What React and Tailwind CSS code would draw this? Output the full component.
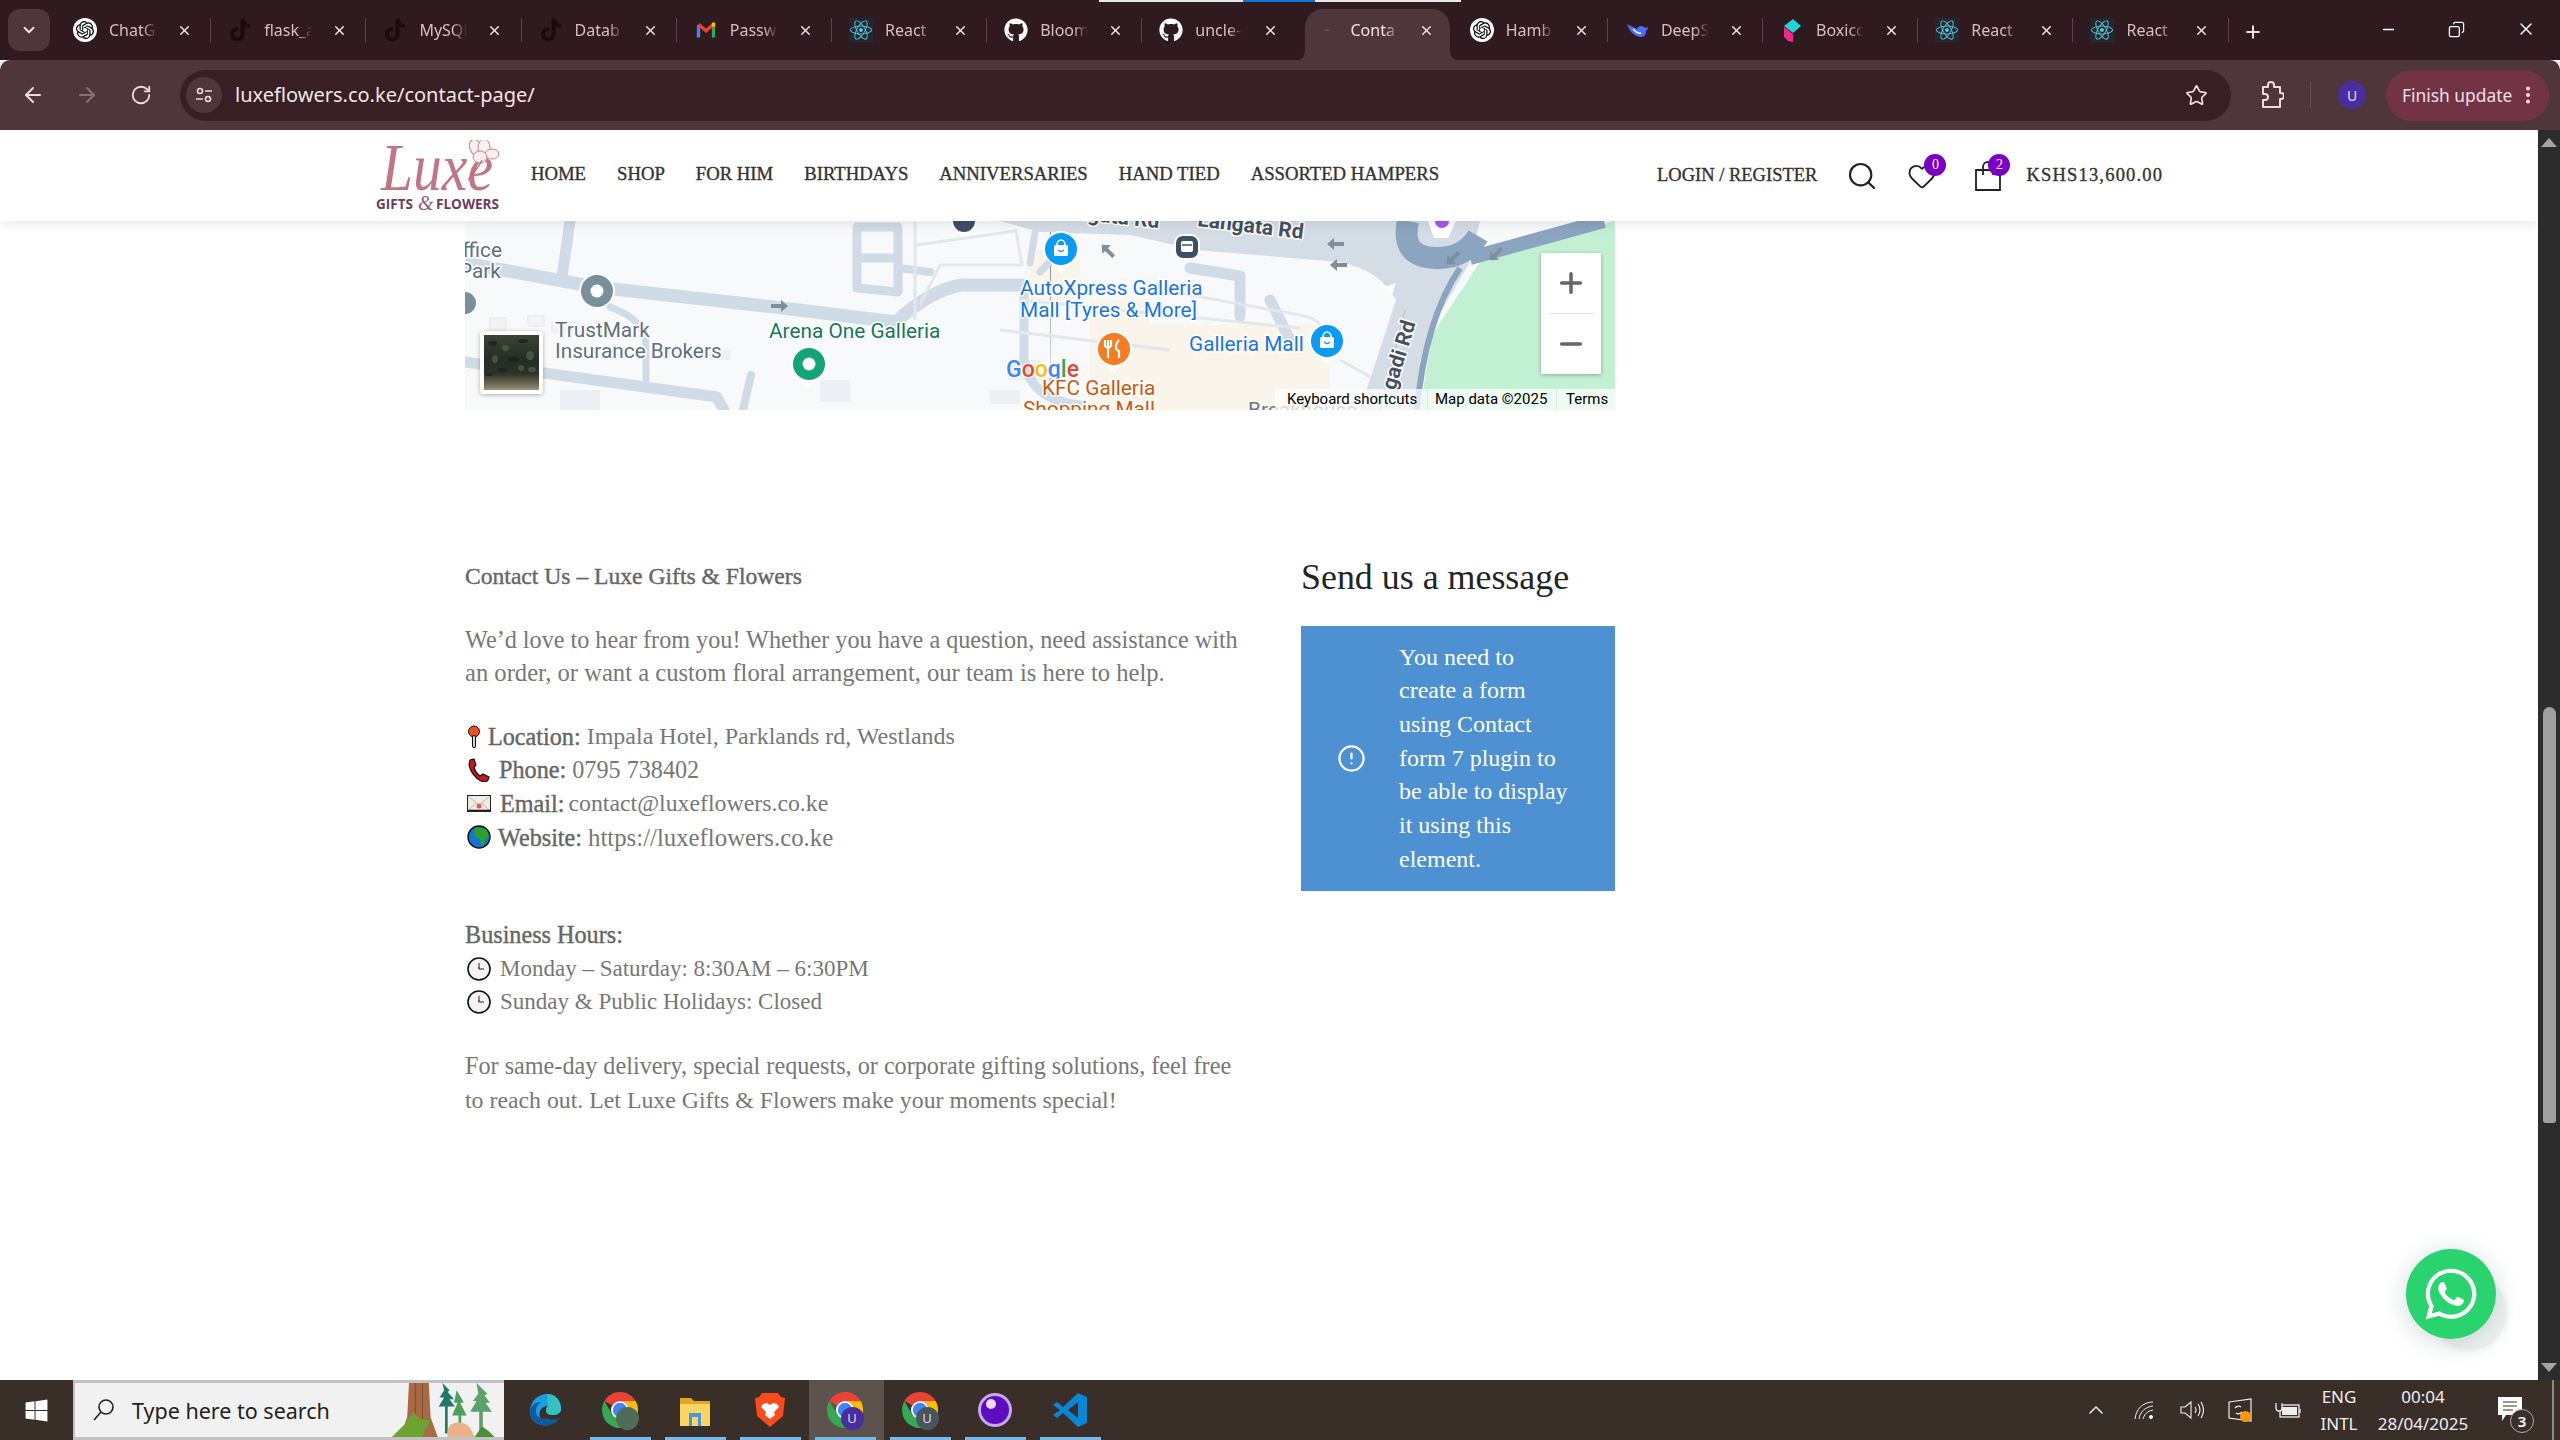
import React from "react";
import { ArrowLeft, ArrowRight, RotateCw, Star, EllipsisVertical, Plus, X, Minus, ChevronDown, ChevronUp, Copy, Search, Heart, AlertCircle } from "lucide-react";
import { FaGithub, FaTiktok, FaReact, FaWindows, FaWhatsapp } from "react-icons/fa";
import { SiOpenai } from "react-icons/si";

const serif = "font-['Liberation_Serif',serif]";
const semi = "[-webkit-text-stroke:0.4px_#666] text-[#666]";
const navSemi = "[-webkit-text-stroke:0.35px_#333] text-[#333]";

function Gmail() {
  return (
    <svg viewBox="0 0 24 24" className="w-[22px] h-[20px]" fill="none">
      <path d="M3 21V6" stroke="#4285f4" strokeWidth="4" />
      <path d="M21 21V6" stroke="#34a853" strokeWidth="4" />
      <path d="M3 5l9 8 9-8" stroke="#ea4335" strokeWidth="4" />
      <path d="M21 3v5" stroke="#fbbc04" strokeWidth="4" />
    </svg>
  );
}
function Openai() {
  return (
    <div className="w-[24px] h-[24px] rounded-full bg-white flex items-center justify-center">
      <SiOpenai className="w-[18px] h-[18px] text-black" />
    </div>
  );
}
function ReactIco() {
  return (
    <div className="w-[24px] h-[24px] bg-[#23272f] flex items-center justify-center">
      <FaReact className="w-[22px] h-[22px] text-[#58c4dc]" />
    </div>
  );
}
function Deep() {
  return (
    <svg viewBox="0 0 24 24" className="w-[24px] h-[24px]">
      <path d="M2 6c3 8 8 13 14 13 3 0 5-2 5-6 1-1 2-2 2-4-2 1-3 1-4 0-3-2-6-1-7 2-2-1-6-3-10-5z" fill="#4d6bfe" />
      <path d="M8 11c3 3 5 5 8 4" stroke="#fff" strokeWidth="1.4" fill="none" />
    </svg>
  );
}
function Boxi() {
  return (
    <svg viewBox="0 0 24 24" className="w-[24px] h-[28px]">
      <path d="M4 8l9-7 8 7-8 7z" fill="#22d3d6" />
      <path d="M4 9l9 7v8l-5-1-4-4z" fill="#f0288a" />
    </svg>
  );
}
const gh = <FaGithub className="w-[24px] h-[24px] text-white" />;
const tt = <FaTiktok className="w-[20px] h-[24px] text-[#1a0b0f]" />;

const tabs = [
  ["ChatG", <Openai />],
  ["flask_a", tt],
  ["MySQL", tt],
  ["Datab", tt],
  ["Passw", <Gmail />],
  ["React", <ReactIco />],
  ["Bloom", gh],
  ["uncle-", gh],
  ["Conta", <span className="text-[10px] text-[#7d5c63]">~</span>, true],
  ["Hamb", <Openai />],
  ["DeepS", <Deep />],
  ["Boxicc", <Boxi />],
  ["React", <ReactIco />],
  ["React", <ReactIco />],
];

function TabStrip() {
  return (
    <div className="h-[60px] shrink-0 bg-[#2f1a20] flex pt-[9px] relative font-['Noto_Sans',sans-serif]">
      <div className="absolute top-0 left-[1099px] w-[362px] h-[2px] bg-[#e8e8e8]">
        <div className="ml-[144px] w-[72px] h-[2px] bg-[#0a74d8]" />
      </div>
      <div className="w-[42px] h-[42px] ml-[8px] mr-[6px] rounded-xl bg-[#4f363b] flex items-center justify-center text-[#f3dfe3]">
        <ChevronDown size={18} strokeWidth={2.5} />
      </div>
      {tabs.map(([t, ico, active], i) => (
        <div key={i} className="w-[155.2px] h-[51px] relative">
          {active && (
            <div className="absolute left-[7px] right-[3px] top-0 bottom-0 bg-[#4f363b] rounded-t-[18px]">
              <svg className="absolute -left-[8px] bottom-0 w-[8px] h-[10px]" viewBox="0 0 8 10"><path d="M8 0v10H0c5 0 8-4 8-10z" fill="#4f363b" /></svg>
              <svg className="absolute -right-[8px] bottom-0 w-[8px] h-[10px]" viewBox="0 0 8 10"><path d="M0 0v10h8C3 10 0 6 0 0z" fill="#4f363b" /></svg>
            </div>
          )}
          <div className={`relative mt-[9px] h-[24px] flex items-center pl-[17px] ${active || i === 7 ? "" : "border-r border-[#5f454a]"}`}>
            <div className="w-[24px] h-[24px] flex items-center justify-center shrink-0">{ico}</div>
            <div className={`ml-[12px] w-[48px] overflow-hidden whitespace-nowrap text-[16px] [mask-image:linear-gradient(90deg,#000_70%,transparent)] ${active ? "text-[#f3dfe3]" : "text-[#d9bcc2]"}`}>{t}</div>
            <X size={15} strokeWidth={2.4} className="ml-[20px] text-[#f3dfe3] shrink-0" />
          </div>
        </div>
      ))}
      <Plus size={20} strokeWidth={2.4} className="ml-[14px] mt-[13px] text-[#f3dfe3]" />
      <div className="ml-auto flex text-white h-[40px] items-center">
        <Minus size={17} strokeWidth={2} className="mr-[51px]" />
        <Copy size={17} strokeWidth={1.8} className="mr-[51px] -scale-x-100" />
        <X size={20} strokeWidth={1.7} className="mr-[24px]" />
      </div>
    </div>
  );
}

function Toolbar() {
  return (
    <div className="h-[70px] shrink-0 bg-[#4f363b] rounded-t-[10px] flex items-center text-[#f0d8dd] font-['Noto_Sans',sans-serif]">
      <ArrowLeft size={24} strokeWidth={2} className="ml-[21px]" />
      <ArrowRight size={24} strokeWidth={2} className="ml-[30px] text-[#8a6f75]" />
      <RotateCw size={22} strokeWidth={2} className="ml-[31px]" />
      <div className="ml-[28px] w-[2051px] h-[51px] rounded-full bg-[#371f24] flex items-center">
        <div className="ml-[6px] w-[36px] h-[36px] rounded-full bg-[#4f363b] flex items-center justify-center">
          <svg viewBox="0 0 20 20" className="w-[20px] h-[20px]" fill="none" stroke="#f0d8dd" strokeWidth="1.6">
            <circle cx="6" cy="6" r="2.5" /><path d="M11 6h7M2 14h7" /><circle cx="14" cy="14" r="2.5" />
          </svg>
        </div>
        <div className="ml-[13px] text-[20px] leading-none text-[#f3e4e7]">luxeflowers.co.ke/contact-page/</div>
        <Star size={23} strokeWidth={1.8} className="ml-auto mr-[23px]" />
      </div>
      <svg viewBox="0 0 24 30" className="ml-[29px] w-[24px] h-[30px]" fill="none" stroke="#f0d8dd" strokeWidth="2" strokeLinejoin="round">
        <path d="M3 7h5V5a3 3 0 0 1 6 0v2h6v6h1a3 3 0 0 1 0 6h-1v8H3v-7h2a3 3 0 0 0 0-6H3z" />
      </svg>
      <div className="ml-[26px] w-[1px] h-[26px] bg-[#6b5056]" />
      <div className="ml-[27px] w-[28px] h-[28px] rounded-full bg-[#4a2d9e] flex items-center justify-center text-[14px] text-[#e6dcff]">U</div>
      <div className="ml-[20px] w-[163px] h-[51px] rounded-full bg-[#723445] flex items-center pl-[16px] text-[17.4px] text-[#f3dfe3] whitespace-nowrap">
        Finish update
        <EllipsisVertical size={22} strokeWidth={2.4} className="ml-[5px]" />
      </div>
    </div>
  );
}

function Logo() {
  return (
    <svg viewBox="376 142 124 72" className="w-[124px] h-[72px] shrink-0">
      <text x="381" y="192" fontFamily="'Liberation Serif',serif" fontStyle="italic" fontSize="68" fill="#c27582" textLength="112" lengthAdjust="spacingAndGlyphs">Luxe</text>
      <g fill="#fbeff1" stroke="#c9808c" strokeWidth="1">
        <ellipse cx="476" cy="150" rx="6" ry="9" transform="rotate(-25 476 150)" />
        <ellipse cx="484" cy="150" rx="6" ry="9" />
        <ellipse cx="492" cy="156" rx="7" ry="5" />
        <ellipse cx="480" cy="159" rx="7" ry="6" />
      </g>
      <path d="M482 162c-2 6-8 12-14 20" stroke="#bd6874" strokeWidth="1.2" fill="none" />
      <text x="376" y="211" fontFamily="'Open Sans',sans-serif" fontWeight="700" fontSize="13.5" fill="#6e3a5f">GIFTS</text>
      <text x="418" y="212" fontFamily="'Liberation Serif',serif" fontStyle="italic" fontSize="20" fill="#8a5a78">&amp;</text>
      <text x="436" y="211" fontFamily="'Open Sans',sans-serif" fontWeight="700" fontSize="13.5" fill="#6e3a5f" textLength="63" lengthAdjust="spacingAndGlyphs">FLOWERS</text>
    </svg>
  );
}

function Badge({ n }) {
  return (
    <span className="absolute -top-[7px] -right-[9px] w-[22px] h-[22px] rounded-full bg-[#7a00c4] text-white text-[14px] flex items-center justify-center">{n}</span>
  );
}

function Header() {
  return (
    <header className={`relative z-10 h-[91px] bg-white shadow-[0_2px_12px_rgba(0,0,0,0.10)] flex items-center pl-[376px] ${serif}`}>
      <Logo />
      <nav className={`ml-[31px] flex gap-[31px] text-[18.7px] whitespace-nowrap -mt-[3px] ${navSemi}`}>
        <span>HOME</span><span>SHOP</span><span>FOR HIM</span><span>BIRTHDAYS</span><span>ANNIVERSARIES</span><span>HAND TIED</span><span>ASSORTED HAMPERS</span>
      </nav>
      <span className={`ml-[218px] text-[18.5px] whitespace-nowrap ${navSemi}`}>LOGIN / REGISTER</span>
      <Search size={32} strokeWidth={1.6} className="ml-[29px] text-[#222]" />
      <div className="relative ml-[29px]"><Heart size={30} strokeWidth={1.5} className="text-[#222]" /><Badge n="0" /></div>
      <div className="relative ml-[38px]">
        <svg viewBox="0 0 26 30" className="w-[26px] h-[30px]" fill="none" stroke="#222" strokeWidth="1.8"><path d="M1 9h24v20H1z" /><path d="M8 14V6a5 5 0 0 1 10 0v8" /></svg>
        <Badge n="2" />
      </div>
      <span className={`ml-[25px] text-[18.5px] tracking-[1.2px] whitespace-nowrap ${navSemi}`}>KSHS13,600.00</span>
    </header>
  );
}

function Pin({ x, y, c, r = 16, icon }) {
  return (
    <g>
      <path d={`M${x - r - 2} ${y}a${r + 2} ${r + 2} 0 1 1 ${2 * r + 4} 0c0 10-10 14-${r + 2} 24c-${r - 8}-10-${r + 2}-14-${r + 2}-24z`} fill="#fff" />
      <circle cx={x} cy={y} r={r} fill={c} />
      {icon}
    </g>
  );
}
function Bag({ x, y }) {
  return (
    <g fill="#fff">
      <rect x={x - 7} y={y - 3} width="14" height="11" rx="1.5" />
      <path d={`M${x - 4} ${y - 3}a4 5 0 0 1 8 0`} stroke="#fff" strokeWidth="1.6" fill="none" />
      <path d={`M${x - 3} ${y + 2}q3 3 6 0`} stroke="#0a9bf5" strokeWidth="1.2" fill="none" />
    </g>
  );
}
const Arrow = ({ x, y, rot }) => (
  <path d="M-9 0l7-6v4h10v4H-2v4z" fill="#7e8e9c" transform={`translate(${x} ${y}) rotate(${rot})`} />
);

const spots = [[4,6,9,5],[18,10,7,6],[34,4,10,4],[8,20,6,8],[24,22,12,5],[42,16,8,9],[14,33,9,4],[34,30,6,6],[2,38,7,3],[44,32,8,5]];

function MapView() {
  const halo = { paintOrder: "stroke", stroke: "#fff", strokeWidth: 3, strokeLinejoin: "round" };
  const road = { fill: "none", stroke: "#cfdbe6", strokeLinecap: "round", strokeLinejoin: "round" };
  const thin = { fill: "none", stroke: "#e3e7ec", strokeWidth: 3 };
  return (
    <div className="relative h-[189px] w-[1150px] overflow-hidden bg-[#f8f9fa] font-['Roboto',sans-serif]">
      <svg viewBox="465 221 1150 189" className="w-[1150px] h-[189px] block">
        <rect x="465" y="221" width="1150" height="189" fill="#f8f9fa" />
        <path d="M1030 250h50v50h-50zM1090 300h60v110h-60zM1150 325h180v85h-180z" fill="#faf5ea" />
        <path d="M820 380h30v22h-30zM1010 360h30v20h-30zM990 390h30v14h-30zM700 350h30v10h-30zM560 390h40v20h-40z" fill="#eceff3" />
        <path d="M490 318h16v12h-16zM528 316h16v10h-16zM552 322h20v10h-20zM575 325h14v10h-14z" fill="#f1f3f5" stroke="#e3e7ec" />
        <path d="M1050 221h1v189" stroke="#eef0f2" />
        <path d="M465 263L595 287L774 307L896 322Q930 290 962 285L1024 285" {...road} strokeWidth="13" />
        <path d="M570 221L562 277" {...road} strokeWidth="11" />
        <path d="M610 307Q646 320 646 345V380" {...road} strokeWidth="7" />
        <path d="M465 362L544 373L717 397L724 410" {...road} strokeWidth="11" />
        <path d="M751 375L743 410" {...road} strokeWidth="8" />
        <path d="M857 227h41v65l-41-4zM858 258h40" {...road} strokeWidth="9" />
        <path d="M898 268l32 4" {...road} strokeWidth="8" />
        <path d="M915 222V320" {...thin} /><path d="M916 245l100-14 6 34-82 0-20 40" {...thin} />
        <path d="M1024 285V360Q1030 400 1080 405" {...road} strokeWidth="9" />
        <path d="M1190 268l50 8v40M1270 300l20 40" {...road} strokeWidth="11" />
        <path d="M1020 300l280 28M1000 330l170 20M1175 292l130 24q20 4 22 30" {...thin} />
        <path d="M1340 360l40 22" {...thin} />
        <path d="M1000 221H1410L1480 221L1470 262L1430 330L1418 410H1360L1396 300Q1380 270 1340 262L1197 250L1130 235L1040 232z" fill="#d4dde6" />
        <path d="M1035 233l-5 30M1060 250q-8 10-20 22" {...road} strokeWidth="7" />
        <path d="M1613 221H1615V410H1420L1432 335L1480 262z" fill="#c1f0d3" />
        <path d="M1460 268Q1425 320 1417 410" fill="none" stroke="#8ba4c0" strokeWidth="6" />
        <path d="M1604 221L1470 258" fill="none" stroke="#8ba4c0" strokeWidth="14" />
        <path d="M1408 221Q1400 258 1437 258Q1465 258 1478 236" fill="none" stroke="#8ba4c0" strokeWidth="22" />
        <path d="M1428 221h28l-8 17h-14z" fill="#fff" />
        <circle cx="1442" cy="221" r="7" fill="#a855f7" />
        <path d="M1396 283l-4 12-8-8z" fill="#fff" />
        <path d="M1380 410l25-100" stroke="#b8c3cf" strokeWidth="1" />
        <Arrow x={1336} y={244} rot={0} />
        <Arrow x={1339} y={265} rot={0} />
        <Arrow x={1453} y={258} rot={-45} />
        <Arrow x={1496} y={254} rot={-45} />
        <Arrow x={779} y={306} rot={180} />
        <Arrow x={1108} y={251} rot={45} />
        <circle cx="964" cy="221" r="12" fill="#3d5069" stroke="#fff" strokeWidth="2" />
        <rect x="1175" y="235" width="24" height="24" rx="8" fill="#3d5069" stroke="#fff" strokeWidth="2" />
        <rect x="1181" y="241" width="12" height="11" rx="2" fill="#fff" />
        <path d="M1182 245h10" stroke="#3d5069" strokeWidth="1.5" />
        <text fontFamily="Roboto,sans-serif" fontWeight="700" fontSize="21" fill="#44525f" transform="translate(1197 226) rotate(7)" style={halo}>Langata Rd</text>
        <text fontFamily="Roboto,sans-serif" fontWeight="700" fontSize="21" fill="#44525f" transform="translate(1053 217) rotate(6)" style={halo}>Langata Rd</text>
        <text fontFamily="Roboto,sans-serif" fontWeight="700" fontSize="21" fill="#44525f" transform="translate(1395 391) rotate(-73)" style={halo}>gadi Rd</text>
        <g fontFamily="Roboto,sans-serif" fontSize="20.8">
          <text x="465" y="257" fill="#5c7080" style={halo} dx="-17">Office</text>
          <text x="465" y="278" fill="#5c7080" style={halo} dx="-6">Park</text>
          <text x="555" y="337" fill="#5c7080" style={halo}>TrustMark</text>
          <text x="555" y="358" fill="#5c7080" style={halo}>Insurance Brokers</text>
          <text x="769" y="338" fill="#137a57" style={halo}>Arena One Galleria</text>
          <text x="1020" y="295" fill="#1a73e8" style={halo}>AutoXpress Galleria</text>
          <text x="1020" y="317" fill="#1a73e8" style={halo}>Mall [Tyres &amp; More]</text>
          <text x="1189" y="351" fill="#1a73e8" style={halo}>Galleria Mall</text>
          <text x="1248" y="417" fill="#6b7c8c">Breakhouse</text>
        </g>
        <Pin x={1061} y={249} c="#0a9bf5" icon={<Bag x={1061} y={248} />} />
        <Pin x={1327} y={341} c="#0a9bf5" icon={<Bag x={1327} y={340} />} />
        <Pin x={1114} y={349} c="#f57c21" icon={<path d="M1108 340v18M1119 340c-4 4-4 10 0 11v7M1105 340v6q3 3 6 0v-6" stroke="#fff" strokeWidth="2.2" fill="none" />} />
        <Pin x={597} y={291} c="#78909c" icon={<circle cx="597" cy="291" r="6.5" fill="#fff" />} />
        <Pin x={809} y={364} c="#12a578" icon={<circle cx="809" cy="364" r="6.5" fill="#fff" />} />
        <circle cx="465" cy="303" r="12" fill="#78909c" stroke="#fff" strokeWidth="2" />
        <text x="1006" y="377" fontFamily="Roboto,sans-serif" fontWeight="500" fontSize="23" style={{ paintOrder: "stroke", stroke: "#fff", strokeWidth: 2 }}>
          <tspan fill="#4285f4">G</tspan><tspan fill="#ea4335">o</tspan><tspan fill="#fbbc04">o</tspan><tspan fill="#4285f4">g</tspan><tspan fill="#34a853">l</tspan><tspan fill="#ea4335">e</tspan>
        </text>
        <g fontFamily="Roboto,sans-serif" fontSize="20.8" fill="#c9590e">
          <text x="1042" y="395" style={halo}>KFC Galleria</text>
          <text x="1023" y="416" style={halo}>Shopping Mall</text>
        </g>
      </svg>
      <div className="absolute left-[15px] top-[110px] w-[63px] h-[63px] rounded-[4px] border-[4px] border-white shadow-[0_1px_4px_rgba(0,0,0,0.3)] overflow-hidden bg-[linear-gradient(180deg,#3a4434_0%,#222e26_45%,#2b3326_70%,#6a6650_88%,#9a927c_100%)]">
        <svg viewBox="0 0 55 55" className="w-full h-full block">
          {spots.map(([x, y, w, h], i) => (
            <ellipse key={i} cx={x + w / 2} cy={y + h / 2} rx={w / 2} ry={h / 2} fill={i % 2 ? "#5a5f48" : "#161f1a"} opacity="0.7" />
          ))}
        </svg>
      </div>
      <div className="absolute left-[1076px] top-[32px] w-[60px] h-[121px] bg-white shadow-[0_1px_4px_rgba(0,0,0,0.3)] flex flex-col items-center text-[#666]">
        <div className="h-[60px] flex items-center justify-center"><Plus size={32} strokeWidth={2.6} /></div>
        <div className="w-[45px] h-[1px] bg-[#e6e6e6]" />
        <div className="h-[60px] flex items-center justify-center"><Minus size={32} strokeWidth={2.6} /></div>
      </div>
      <div className="absolute right-0 bottom-0 h-[21px] w-[340px] bg-[rgba(255,255,255,0.72)] flex items-center text-[15px] text-black whitespace-nowrap">
        <span className="ml-[12px] w-[140px]">Keyboard shortcuts</span>
        <span className="w-[129px] pl-[7px] border-l border-[#dfe5e2]">Map data ©2025</span>
        <span className="pl-[9px] border-l border-[#dfe5e2]">Terms</span>
      </div>
    </div>
  );
}

const Pinny = () => (
  <svg viewBox="0 0 14 24" className="w-[14px] h-[24px] shrink-0 mr-[7px] ml-[2px]">
    <circle cx="7" cy="6.5" r="5.5" fill="#f04f1f" stroke="#111" strokeWidth="1" />
    <path d="M7 12v9" stroke="#111" strokeWidth="4" strokeLinecap="round" /><path d="M7 12v9" stroke="#eee" strokeWidth="1.8" strokeLinecap="round" />
  </svg>
);
const Phone = () => (
  <svg viewBox="0 0 24 24" className="w-[24px] h-[24px] shrink-0 mr-[8px] ml-[2px]">
    <path d="M3 2l4-1 2 6-2 2c1 4 3 7 6 9l3-2 6 3-1 3c-1 2-4 2-7 1C8 20 3 13 2 7z" fill="#c8161d" stroke="#111" strokeWidth="1.2" />
  </svg>
);
const Mail = () => (
  <svg viewBox="0 0 24 17" className="w-[24px] h-[17px] shrink-0 mr-[9px] ml-[2px]">
    <rect x="0.5" y="0.5" width="23" height="16" fill="#f2ebe4" stroke="#222" />
    <path d="M1 1l11 9 11-9M1 16l8-8M23 16l-8-8" stroke="#bbb" fill="none" />
    <circle cx="12" cy="11" r="2.5" fill="#e0604a" />
    <path d="M0 15.5h24" stroke="#222" strokeWidth="1.6" />
  </svg>
);
const Globe = () => (
  <svg viewBox="0 0 24 24" className="w-[24px] h-[24px] shrink-0 mr-[7px] ml-[2px]">
    <circle cx="12" cy="12" r="11" fill="#1274d4" stroke="#111" strokeWidth="1.4" />
    <path d="M9 2l10 2 3 6-4 5-1 6-3-1-1-6-5-2-1-5z" fill="#2ca02c" />
  </svg>
);
const Clock = () => (
  <svg viewBox="0 0 24 24" className="w-[24px] h-[24px] shrink-0 mr-[9px] ml-[2px]">
    <circle cx="12" cy="12" r="11" fill="#f4f4f4" stroke="#111" strokeWidth="1.6" />
    <path d="M12 6v6h5" stroke="#222" strokeWidth="1" fill="none" /><path d="M12 10v2" stroke="#d01c1c" strokeWidth="1.4" />
  </svg>
);

function Row({ icon, label, children, cls = "", gap = "mr-[6px]" }) {
  return (
    <div className={`flex items-center h-[33.6px] whitespace-nowrap ${cls}`}>
      {icon}
      {label && <b className={`font-normal text-[24.2px] ${gap} ${semi}`}>{label}</b>}
      {children}
    </div>
  );
}

function Content() {
  return (
    <div className={`ml-[465px] w-[1150px] pt-[150px] flex ${serif}`}>
      <div className="w-[790px] text-[24.2px] leading-[33.6px] text-[#777]">
        <p className={`mb-[29px] text-[23.6px] ${semi}`}>Contact Us – Luxe Gifts &amp; Flowers</p>
        <p className="mb-[30px]">We’d love to hear from you! Whether you have a question, need assistance with<br /><span className="text-[24.6px]">an order, or want a custom floral arrangement, our team is here to help.</span></p>
        <Row icon={<Pinny />} label="Location:" cls="text-[24px]">Impala Hotel, Parklands rd, Westlands</Row>
        <Row icon={<Phone />} label="Phone:">0795 738402</Row>
        <Row icon={<Mail />} label="Email:" cls="text-[23.8px]" gap="mr-[4px]">contact@luxeflowers.co.ke</Row>
        <Row icon={<Globe />} label="Website:" cls="text-[24.8px]">https://luxeflowers.co.ke</Row>
        <p className={`mt-[64px] ${semi}`}>Business Hours:</p>
        <Row icon={<Clock />} cls="text-[23px]">Monday – Saturday: 8:30AM – 6:30PM</Row>
        <Row icon={<Clock />} cls="text-[23px]">Sunday &amp; Public Holidays: Closed</Row>
        <p className="mt-[30px]">For same-day delivery, special requests, or corporate gifting solutions, feel free<br /><span className="text-[23.8px]">to reach out. Let Luxe Gifts &amp; Flowers make your moments special!</span></p>
      </div>
      <div className="ml-auto w-[314px]">
        <h2 className="text-[35.9px] leading-[34px] text-[#242424] font-normal">Send us a message</h2>
        <div className="mt-[32px] h-[265px] bg-[#4d91d3] flex items-center text-white text-[24px] leading-[33.7px]">
          <AlertCircle size={29} strokeWidth={1.8} className="ml-[36px] shrink-0" />
          <p className="ml-[33px] whitespace-nowrap">You need to<br />create a form<br />using Contact<br />form 7 plugin to<br />be able to display<br />it using this<br />element.</p>
        </div>
      </div>
    </div>
  );
}

function Chrome({ badge, bc = "#4a2d9e", t = "U" }) {
  return (
    <div className="relative w-[36px] h-[40px] flex items-center">
      <svg viewBox="4 4 40 40" className="w-[36px] h-[36px]">
        <path d="M6.68 14A20 20 0 0 1 41.32 14H24A10 10 0 0 0 15.34 19Z" fill="#ea4335" />
        <path d="M6.68 14A20 20 0 0 0 24 44L32.66 29A10 10 0 0 1 15.34 29Z" fill="#34a853" />
        <path d="M24 14H41.32A20 20 0 0 1 24 44L32.66 29A10 10 0 0 0 24 14Z" fill="#fbbc04" />
        <circle cx="24" cy="24" r="10" fill="#fff" /><circle cx="24" cy="24" r="8" fill="#4285f4" />
      </svg>
      {badge && <span className="absolute -right-[1px] bottom-0 w-[23px] h-[23px] rounded-full flex items-center justify-center text-[13px] text-[#ddd]" style={{ background: bc }}>{t}</span>}
    </div>
  );
}

const apps = [
  [<svg viewBox="0 0 36 36" className="w-[36px] h-[36px]"><path d="M3 20C3 8 12 2 20 2c9 0 14 7 14 15 0 4-4 6-8 6-5 0-7-2-7-5 0-2 1-3 2-4-6 0-10 5-8 11 1 4 5 8 10 8-10 2-20-3-20-13z" fill="#1b9de2" /><path d="M3 20c0 10 10 15 20 13 4-1 7-3 9-7-4 2-9 2-12 0-5 2-11-1-11-7 0-5 3-8 6-9C9 10 3 13 3 20z" fill="#0c59a4" /><path d="M20 2c9 0 14 7 14 15 0 4-4 6-8 6-5 0-7-2-7-5 0-2 1-3 2-4" fill="#35c1c1" /></svg>, false, false],
  [<Chrome badge bc="#4f6b5a" t="" />, true, false],
  [<svg viewBox="0 0 32 34" className="w-[32px] h-[34px]"><path d="M1 5h11l3 3h16v8H1z" fill="#e3a81e" /><path d="M1 11h30v22H1z" fill="#fcd462" /><path d="M10 20h12v13H10z" fill="#3f9ae0" /><path d="M13 24h6v9h-6z" fill="#fcd462" /></svg>, true, false],
  [<svg viewBox="0 0 30 36" className="w-[30px] h-[36px]"><path d="M7 1h16l3 4 4 1-2 18-13 11L2 24 0 6l4-1z" fill="#fb4a1c" /><path d="M8 12l4-1 3 2 3-2 4 1 2 3-5 5 1 3-5 4-5-4 1-3-5-5z" fill="#fff" /></svg>, true, false],
  [<Chrome badge />, true, true],
  [<Chrome badge bc="#46565f" />, true, false],
  [<svg viewBox="0 0 36 36" className="w-[36px] h-[36px]"><circle cx="18" cy="18" r="17" fill="#c9a8f0" /><circle cx="18" cy="18" r="14" fill="#5d0cc0" /><circle cx="14" cy="12" r="5" fill="#e9dbff" /></svg>, true, false],
  [<svg viewBox="0 0 36 36" className="w-[36px] h-[36px]"><path d="M26 1l9 4v26l-9 4L11 21l-6 5-4-3 7-5-7-5 4-3 6 5z" fill="#0a86d8" /><path d="M26 10v16l-10-8z" fill="#3a2e29" /></svg>, true, false],
];

function Taskbar() {
  return (
    <div className="h-[60px] shrink-0 bg-[#3a2e29] flex items-stretch text-white font-['Noto_Sans',sans-serif]">
      <div className="w-[73px] flex items-center justify-center"><FaWindows size={25} /></div>
      <div className="w-[431px] bg-[#f1f1f1] border-t-[3px] border-b-[3px] border-l-[2px] border-[#c2c2c2] flex items-center relative overflow-hidden">
        <svg viewBox="0 0 24 24" className="ml-[17px] w-[24px] h-[24px]" fill="none" stroke="#222" strokeWidth="1.6"><circle cx="14" cy="9" r="7" /><path d="M9 14l-7 8" /></svg>
        <span className="ml-[16px] mt-[2px] text-[21.5px] text-[#222] whitespace-nowrap">Type here to search</span>
        <svg viewBox="386 1380 118 60" className="absolute right-0 top-0 w-[118px] h-[54px]">
          <path d="M405 1380h22l2 38 8 22h-42l8-22z" fill="#a86a45" />
          <path d="M412 1380v40M420 1380v40" stroke="#7d4a2b" />
          <path d="M442 1380l8 8 -2 2 7 8h-5l6 8h-8v30h-3v-30h-7l6-10h-5l5-8z" fill="#1f7a6d" />
          <path d="M458 1388l8 14h-4l7 14h-6v20h-3v-20h-7l6-14h-4z" fill="#4e9e5c" />
          <path d="M480 1380l12 12-3 2 6 8h-5l7 10h-10v24h-4v-24h-10l7-12h-4l6-8z" fill="#5da06a" />
          <path d="M386 1440l14-14 10-14 6 8 14 2-6 8-4 10z" fill="#6da32f" />
          <path d="M448 1440q-2-16 12-16 10 0 14 8l4 8z" fill="#eab286" />
          <path d="M478 1440l8-12 8 6 6 6z" fill="#4d8e36" />
        </svg>
      </div>
      <div className="w-[3px]" />
      {apps.map(([ico, line, active], i) => (
        <div key={i} className="relative w-[75px] flex items-center justify-center">
          {active && <div className="absolute left-[2px] right-[-2px] top-0 bottom-0 bg-[#5d534d]" />}
          <div className="relative">{ico}</div>
          {line && <div className="absolute left-[8px] right-[6px] bottom-0 h-[3px] bg-[#76b9ed]" />}
        </div>
      ))}
      <div className="ml-auto flex items-center">
        <div className="w-[48px] flex justify-center"><ChevronUp size={24} strokeWidth={1.4} /></div>
        <div className="w-[48px] flex justify-center">
          <svg viewBox="0 0 20 20" className="w-[20px] h-[20px]" fill="none" stroke="#eee" strokeWidth="1"><path d="M1 19C2 9 9 2 19 2M5 19c1-7 6-12 14-13M9 19c1-4 4-8 10-9" /><circle cx="17" cy="17" r="1.6" fill="#eee" /></svg>
        </div>
        <div className="w-[48px] flex justify-center">
          <svg viewBox="0 0 24 20" className="w-[24px] h-[20px]" fill="none" stroke="#eee" strokeWidth="1.1"><path d="M1 7v6h4l6 5V2L5 7z" /><path d="M15 7q2 3 0 6M18 4q4 6 0 12M21 2q5 8 0 16" /></svg>
        </div>
        <div className="w-[48px] flex justify-center relative">
          <svg viewBox="0 0 26 24" className="w-[26px] h-[24px]" fill="none" stroke="#eee" strokeWidth="1.2"><path d="M2 4l22-3v22L2 20z" /><path d="M8 10q3-3 6-1M15 14q-3 3-6 1" /></svg>
          <span className="absolute left-[24px] top-[13px] w-[11px] h-[11px] rounded-full bg-[#ff9800]" />
        </div>
        <div className="w-[48px] flex justify-center">
          <svg viewBox="0 0 26 16" className="w-[26px] h-[16px]" fill="none" stroke="#eee" strokeWidth="1.3"><rect x="5" y="3" width="19" height="12" /><rect x="7" y="5" width="15" height="8" fill="#eee" stroke="none" /><path d="M25 7v4" /><path d="M1 1v5a3 3 0 0 0 6 0V1" fill="#3a2e29" /></svg>
        </div>
        <div className="w-[54px] text-[17px] leading-[27px] text-center text-[#eee]">ENG<br />INTL</div>
        <div className="w-[114px] text-[17px] leading-[27px] text-center text-[#eee] whitespace-nowrap">00:04<br />28/04/2025</div>
        <div className="w-[60px] h-full relative">
          <svg viewBox="0 0 24 24" className="absolute left-[18px] top-[17px] w-[24px] h-[24px]"><path d="M0 0h24v18H8l-4 6v-6H0z" fill="#fff" /><path d="M5 5h14M5 9h14M5 13h10" stroke="#3a2e29" /></svg>
          <span className="absolute left-[30px] top-[29px] w-[24px] h-[24px] rounded-full border border-[#aaa] bg-[#3a2e29] text-[15px] font-semibold flex items-center justify-center">3</span>
        </div>
        <div className="w-[20px] h-full flex justify-end"><div className="mr-[6px] w-[2px] h-full bg-[#8a8a8a]" /></div>
      </div>
    </div>
  );
}

function Scrollbar() {
  return (
    <div className="w-[22px] shrink-0 bg-[#2c2c2c] flex flex-col items-center relative">
      <div className="mt-[8px] w-0 h-0 border-l-[8px] border-r-[8px] border-b-[9px] border-l-transparent border-r-transparent border-b-[#a3a3a3]" />
      <div className="mt-[560px] w-[13px] h-[416px] rounded-t-[7px] rounded-b-[3px] bg-[#a0a0a0]" />
      <div className="mt-auto mb-[8px] w-0 h-0 border-l-[8px] border-r-[8px] border-t-[9px] border-l-transparent border-r-transparent border-t-[#a3a3a3]" />
    </div>
  );
}

export default function App() {
  return (
    <div className="w-[2560px] h-[1440px] flex flex-col overflow-hidden bg-white">
      <TabStrip />
      <Toolbar />
      <div className="flex-1 min-h-0 flex">
        <main className="flex-1 min-w-0 relative overflow-hidden bg-white">
          <Header />
          <div className="ml-[465px]"><MapView /></div>
          <Content />
          <div className="absolute left-[2432px] top-[1145px] w-[75px] h-[75px] rounded-full bg-[#eef1f1] shadow-[0_2px_8px_rgba(0,0,0,0.06)]" />
          <div className="absolute left-[2406px] top-[1119px] w-[90px] h-[90px] rounded-full bg-[#29d46e] shadow-[0_4px_24px_rgba(120,150,150,0.35)] flex items-center justify-center">
            <FaWhatsapp size={58} className="text-white" />
          </div>
        </main>
        <Scrollbar />
      </div>
      <Taskbar />
    </div>
  );
}
